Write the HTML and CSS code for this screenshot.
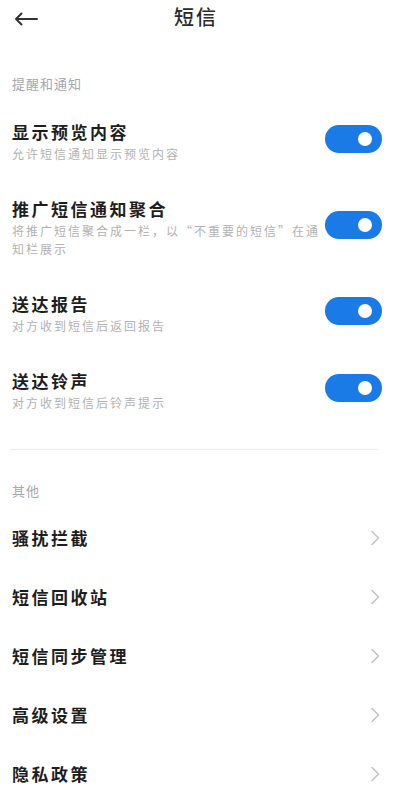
FILE: index.html
```html
<!DOCTYPE html>
<html lang="zh-CN">
<head>
<meta charset="utf-8">
<title>短信</title>
<link rel="stylesheet" href="styles.css">
</head>
<body>
<div class="page">
  <header class="topbar">
    <span class="back">
      <svg width="24" height="14" viewBox="0 0 24 14" fill="none" stroke="#333" stroke-width="2" stroke-linecap="round" stroke-linejoin="round"><path d="M23 7H2M7.5 1.5L2 7l5.5 5.5"/></svg>
    </span>
    <h1 class="title">短信</h1>
    <span class="spacer"></span>
  </header>

  <div class="section-label">提醒和通知</div>

  <div class="toggle-row">
    <div class="text">
      <div class="row-title">显示预览内容</div>
      <div class="row-sub">允许短信通知显示预览内容</div>
    </div>
    <span class="switch"><span class="knob"></span></span>
  </div>

  <div class="toggle-row">
    <div class="text">
      <div class="row-title">推广短信通知聚合</div>
      <div class="row-sub">将推广短信聚合成一栏，以“不重要的短信”在通知栏展示</div>
    </div>
    <span class="switch"><span class="knob"></span></span>
  </div>

  <div class="toggle-row">
    <div class="text">
      <div class="row-title">送达报告</div>
      <div class="row-sub">对方收到短信后返回报告</div>
    </div>
    <span class="switch"><span class="knob"></span></span>
  </div>

  <div class="toggle-row">
    <div class="text">
      <div class="row-title">送达铃声</div>
      <div class="row-sub">对方收到短信后铃声提示</div>
    </div>
    <span class="switch"><span class="knob"></span></span>
  </div>

  <div class="divider"></div>

  <div class="section-label section-label--other">其他</div>

  <div class="nav-row"><span class="row-title">骚扰拦截</span><svg class="chev" width="10" height="16" viewBox="0 0 10 16" fill="none" stroke="#c4c4c4" stroke-width="1.6" stroke-linecap="round" stroke-linejoin="round"><path d="M2 1.5L8.5 8 2 14.5"/></svg></div>
  <div class="nav-row"><span class="row-title">短信回收站</span><svg class="chev" width="10" height="16" viewBox="0 0 10 16" fill="none" stroke="#c4c4c4" stroke-width="1.6" stroke-linecap="round" stroke-linejoin="round"><path d="M2 1.5L8.5 8 2 14.5"/></svg></div>
  <div class="nav-row"><span class="row-title">短信同步管理</span><svg class="chev" width="10" height="16" viewBox="0 0 10 16" fill="none" stroke="#c4c4c4" stroke-width="1.6" stroke-linecap="round" stroke-linejoin="round"><path d="M2 1.5L8.5 8 2 14.5"/></svg></div>
  <div class="nav-row"><span class="row-title">高级设置</span><svg class="chev" width="10" height="16" viewBox="0 0 10 16" fill="none" stroke="#c4c4c4" stroke-width="1.6" stroke-linecap="round" stroke-linejoin="round"><path d="M2 1.5L8.5 8 2 14.5"/></svg></div>
  <div class="nav-row"><span class="row-title">隐私政策</span><svg class="chev" width="10" height="16" viewBox="0 0 10 16" fill="none" stroke="#c4c4c4" stroke-width="1.6" stroke-linecap="round" stroke-linejoin="round"><path d="M2 1.5L8.5 8 2 14.5"/></svg></div>
</div>
</body>
</html>
```

FILE: styles.css
```css
html, body {
  margin: 0;
  padding: 0;
  background: #ffffff;
}
body {
  font-family: "Noto Sans CJK SC", "Noto Sans", sans-serif;
  color: #1c1c1c;
}
.page {
  width: 400px;
  overflow: hidden;
}
.topbar {
  height: 34px;
  display: grid;
  grid-template-columns: 52px 1fr 60px;
  align-items: center;
}
.back {
  display: flex;
  align-items: center;
  padding-left: 14px;
  padding-top: 4px;
}
.title {
  margin: 0;
  text-align: center;
  font-size: 20px;
  font-weight: 500;
  letter-spacing: 2px;
  line-height: 34px;
  color: #2a2a2a;
}
.section-label {
  padding: 41px 12px 11px;
  font-size: 13px;
  line-height: 17px;
  letter-spacing: 1px;
  color: #a6a6ae;
}
.section-label--other {
  padding-top: 32px;
  padding-bottom: 9px;
}
.toggle-row {
  display: flex;
  align-items: center;
  padding: 18px 18px 17px 12px;
}
.text {
  flex: 1;
  min-width: 0;
}
.row-title {
  font-size: 17px;
  line-height: 22px;
  font-weight: 700;
  letter-spacing: 2.5px;
  color: #1e1e1e;
}
.row-sub {
  margin-top: 2px;
  font-size: 12px;
  line-height: 18px;
  letter-spacing: 2px;
  color: #b2b2b2;
}
.switch {
  flex-shrink: 0;
  width: 57px;
  height: 28px;
  border-radius: 14px;
  background: #1a7ae6;
  display: flex;
  align-items: center;
  justify-content: flex-end;
  padding-right: 10px;
  box-sizing: border-box;
  margin-bottom: 6px;
}
.knob {
  width: 14px;
  height: 14px;
  border-radius: 50%;
  background: #ffffff;
}
.divider {
  height: 1px;
  background: #ececec;
  margin: 20px 22px 0 10px;
}
.nav-row {
  height: 59px;
  display: flex;
  align-items: center;
  justify-content: space-between;
  padding: 0 20px 0 12px;
}
.chev {
  flex-shrink: 0;
}
```
